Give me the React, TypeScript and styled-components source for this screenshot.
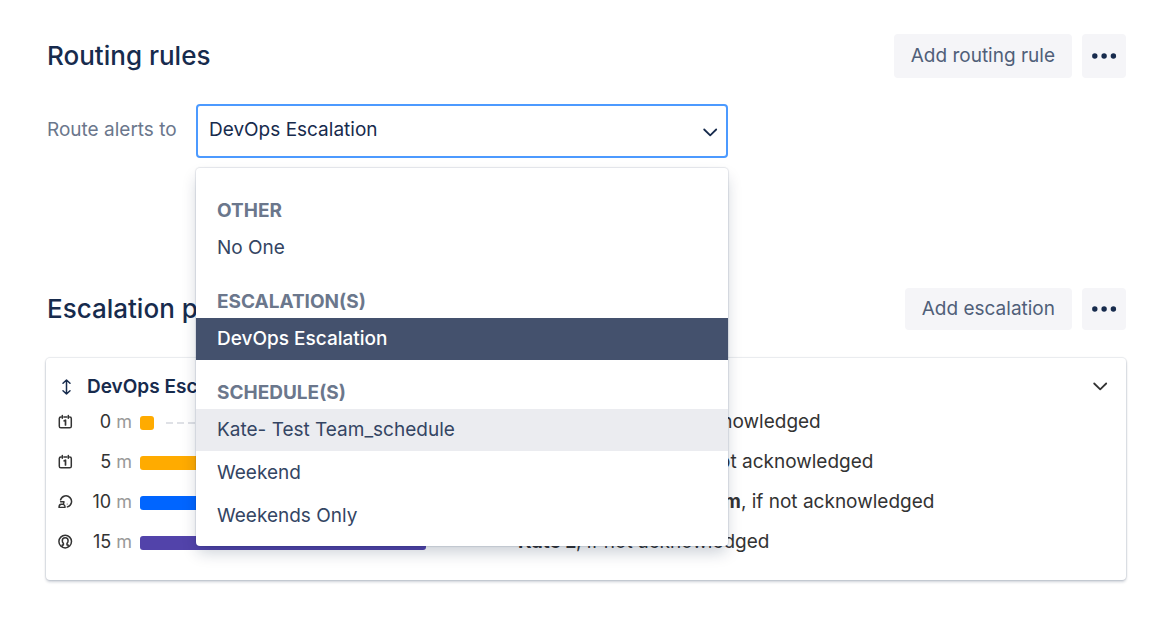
import React, { useState } from "react";
import styled, { createGlobalStyle } from "styled-components";

const GlobalStyle = createGlobalStyle`
  *, *::before, *::after { box-sizing: border-box; }
  body {
    margin: 0;
    background: #fff;
    color: #333;
    font-family: Inter, "Liberation Sans", sans-serif;
    font-size: 19px;
    line-height: 24px;
  }
  button, select { font: inherit; }
`;

const Page = styled.main`
  padding: 34px 44px 40px 46px;
`;

const SectionHeader = styled.header`
  display: flex;
  align-items: center;
  justify-content: space-between;
`;

const Title = styled.h2`
  margin: 0;
  padding: 0 0 1px 1px;
  color: #172b4d;
  font-size: 26px;
  font-weight: 500;
  line-height: 32px;
`;

const Actions = styled.div`
  display: flex;
  gap: 10px;
`;

const ActionButton = styled.button<{ $compact?: boolean }>`
  display: flex;
  align-items: center;
  justify-content: center;
  height: ${(p) => (p.$compact ? 42 : 44)}px;
  padding: 0 17px;
  border: 0;
  border-radius: 4px;
  background: #f5f5f8;
  color: #505f79;
  cursor: pointer;
`;

const MoreButton = styled(ActionButton)`
  width: 44px;
  padding: 0;
  color: #172b4d;
`;

const Field = styled.div`
  display: flex;
  align-items: center;
  margin: 26px 0 130px;
`;

const FieldLabel = styled.label`
  flex: 0 0 150px;
  padding: 0 0 2px 1px;
  color: #6b778c;
`;

const SelectBox = styled.div`
  position: relative;
  flex: 0 1 532px;
`;

const Select = styled.select`
  display: block;
  width: 100%;
  height: 54px;
  padding: 0 40px 2px 11px;
  border: 2px solid #4c9aff;
  border-radius: 4px;
  outline: 0;
  appearance: none;
  background: #fff;
  color: #172b4d;
`;

const SelectArrow = styled.span`
  position: absolute;
  top: 20px;
  right: 10px;
  display: flex;
  color: #172b4d;
  pointer-events: none;
`;

const Menu = styled.div`
  position: absolute;
  z-index: 2;
  top: calc(100% + 10px);
  left: 0;
  right: 0;
  display: flex;
  flex-direction: column;
  gap: 15px;
  padding: 25px 0 9px;
  border-radius: 4px;
  background: #fff;
  box-shadow: 0 0 1px 1px rgba(9, 30, 66, 0.1), 0 8px 16px -2px rgba(9, 30, 66, 0.22);
`;

const MenuGroup = styled.div`
  display: flex;
  flex-direction: column;
  gap: 1px;
`;

const GroupName = styled.div`
  height: 33px;
  padding: 0 21px;
  color: #6b778c;
  font-weight: 700;
  line-height: 36px;
  text-transform: uppercase;
`;

const MenuItem = styled.button<{ $selected: boolean; $focused: boolean }>`
  height: 42px;
  padding: 0 21px;
  border: 0;
  background: ${(p) => (p.$selected ? "#44516d" : p.$focused ? "#ebecf0" : "#fff")};
  color: ${(p) => (p.$selected ? "#fff" : "#344563")};
  font-weight: ${(p) => (p.$selected ? 500 : 400)};
  text-align: left;
  cursor: pointer;
`;

const Card = styled.section`
  margin-top: 28px;
  padding: 14px 14px 18px 12px;
  border-radius: 4px;
  background: #fff;
  box-shadow: 0 0 1px 1px rgba(9, 30, 66, 0.09), 0 2px 3px rgba(9, 30, 66, 0.2);
`;

const CardHeader = styled.div`
  display: flex;
  align-items: center;
  height: 30px;
`;

const CardTitle = styled.h3`
  flex: 1;
  margin: 0 0 0 12px;
  color: #172b4d;
  font-size: 19px;
  font-weight: 600;
`;

const IconButton = styled.button`
  display: flex;
  padding: 3px 4px 5px;
  border: 0;
  background: none;
  color: #333;
  cursor: pointer;
`;

const Steps = styled.ol`
  margin: 0;
  padding: 0;
  list-style: none;
`;

const Step = styled.li`
  display: grid;
  grid-template-columns: 16px 58px 370px 1fr;
  align-items: center;
  height: 40px;
`;

const StepTime = styled.span`
  font-size: 18px;
  text-align: right;
`;

const Unit = styled.span`
  color: #999;
`;

const Track = styled.span`
  display: flex;
  align-items: center;
  gap: 12px;
  padding: 2px 0 0 8px;
`;

const Bar = styled.span<{ $color: string }>`
  flex: none;
  height: 14px;
  border-radius: 3px;
  background: ${(p) => p.$color};
`;

const Dashes = styled.span`
  flex: 1;
  height: 2px;
  background: repeating-linear-gradient(90deg, #dfe1e6 0 7px, transparent 7px 11px);
`;

const StepText = styled.span`
  padding-left: 16px;
  white-space: nowrap;
`;

const Chevron = () => (
  <svg width="16" height="16" viewBox="0 0 16 16" fill="none" stroke="currentColor" strokeWidth="1.8" strokeLinecap="round" strokeLinejoin="round">
    <path d="M2.2 5.5 8.2 11.3 14.2 5.5" />
  </svg>
);

const Dots = () => (
  <svg width="26" height="8" viewBox="0 0 26 8" fill="currentColor">
    <circle cx="3.8" cy="4" r="2.7" />
    <circle cx="13.1" cy="4" r="2.7" />
    <circle cx="22.4" cy="4" r="2.7" />
  </svg>
);

const MoveIcon = () => (
  <svg width="17" height="18" viewBox="0 0 17 18" fill="none" stroke="#172b4d" strokeWidth="1.5" strokeLinecap="round" strokeLinejoin="round">
    <path d="M8.5 2v14M5 5.2 8.5 2 12 5.2M5 12.8 8.5 16 12 12.8" />
  </svg>
);

type IconKind = "schedule" | "rotation" | "user";

const StepIcon = ({ kind }: { kind: IconKind }) => (
  <svg width="15" height="16" viewBox="0 0 15 16" fill="none" stroke="#333" strokeWidth="1.5" strokeLinecap="round" strokeLinejoin="round">
    {kind === "schedule" && (
      <>
        <path d="M2.9 3Q1.3 3 1.3 4.6v7.6q0 1.6 1.6 1.6h8.8q1.6 0 1.6-1.6V4.6Q13.3 3 11.7 3M5.9 3h2.8M4.3 1.6v2.6M10.3 1.6v2.6" />
        <path d="M6.2 6.8 7.5 6.2v4.8" strokeWidth="1.7" />
      </>
    )}
    {kind === "rotation" && (
      <>
        <path d="M2.6 5.8A5.6 5.6 0 1 1 9.4 12.9" />
        <path d="M2.6 7.8H6L5.4 10.3H3.2Q1 10.5 1 13.4H7V12.6Q7 11 5.4 10.3" strokeWidth="1.4" />
        <circle cx="9.2" cy="10" r="0.5" fill="#333" stroke="none" />
      </>
    )}
    {kind === "user" && (
      <>
        <circle cx="7.2" cy="7.6" r="6.3" />
        <path d="M5.4 9.4Q4.3 8.3 4.3 6.7a2.9 2.9 0 0 1 5.8 0Q10.1 8.3 9 9.4M4.2 12.2V11h1.2V9.4M10.2 12.2V11H9V9.4" />
      </>
    )}
  </svg>
);

const groups = [
  { name: "Other", items: ["No One"] },
  { name: "Escalation(s)", items: ["DevOps Escalation"] },
  { name: "Schedule(s)", items: ["Kate- Test Team_schedule", "Weekend", "Weekends Only"] },
];

const steps: { kind: IconKind; minutes: number; bar: number; color: string; who: string }[] = [
  { kind: "schedule", minutes: 0, bar: 14, color: "#ffab00", who: "Weekend M" },
  { kind: "schedule", minutes: 5, bar: 105, color: "#ffab00", who: "Weekends Only 2" },
  { kind: "rotation", minutes: 10, bar: 195, color: "#0065ff", who: "Next to Kate- Test Team" },
  { kind: "user", minutes: 15, bar: 286, color: "#5243aa", who: "Kate L" },
];

export default function App() {
  const [target, setTarget] = useState("DevOps Escalation");
  const [focused, setFocused] = useState("Kate- Test Team_schedule");

  return (
    <>
      <GlobalStyle />
      <Page>
        <SectionHeader>
          <Title>Routing rules</Title>
          <Actions>
            <ActionButton type="button">Add routing rule</ActionButton>
            <MoreButton type="button" aria-label="More routing rule actions"><Dots /></MoreButton>
          </Actions>
        </SectionHeader>

        <Field>
          <FieldLabel htmlFor="route-target">Route alerts to</FieldLabel>
          <SelectBox>
            <Select id="route-target" value={target} onChange={(e) => setTarget(e.target.value)}>
              {groups.map((g) => (
                <optgroup key={g.name} label={g.name}>
                  {g.items.map((item) => <option key={item}>{item}</option>)}
                </optgroup>
              ))}
            </Select>
            <SelectArrow><Chevron /></SelectArrow>
            <Menu role="listbox" aria-label="Route alerts to">
              {groups.map((g) => (
                <MenuGroup key={g.name} role="group" aria-label={g.name}>
                  <GroupName>{g.name}</GroupName>
                  {g.items.map((item) => (
                    <MenuItem
                      key={item}
                      type="button"
                      role="option"
                      aria-selected={item === target}
                      $selected={item === target}
                      $focused={item === focused}
                      onMouseEnter={() => setFocused(item)}
                      onClick={() => setTarget(item)}
                    >
                      {item}
                    </MenuItem>
                  ))}
                </MenuGroup>
              ))}
            </Menu>
          </SelectBox>
        </Field>

        <SectionHeader>
          <Title>Escalation policies</Title>
          <Actions>
            <ActionButton type="button" $compact>Add escalation</ActionButton>
            <MoreButton type="button" $compact aria-label="More escalation actions"><Dots /></MoreButton>
          </Actions>
        </SectionHeader>

        <Card>
          <CardHeader>
            <MoveIcon />
            <CardTitle>DevOps Escalation</CardTitle>
            <IconButton type="button" aria-label="Collapse DevOps Escalation"><Chevron /></IconButton>
          </CardHeader>
          <Steps>
            {steps.map((s) => (
              <Step key={s.minutes}>
                <StepIcon kind={s.kind} />
                <StepTime>{s.minutes} <Unit>m</Unit></StepTime>
                <Track>
                  <Bar $color={s.color} style={{ width: s.bar }} />
                  <Dashes />
                </Track>
                <StepText><b>{s.who}</b>, if not acknowledged</StepText>
              </Step>
            ))}
          </Steps>
        </Card>
      </Page>
    </>
  );
}
